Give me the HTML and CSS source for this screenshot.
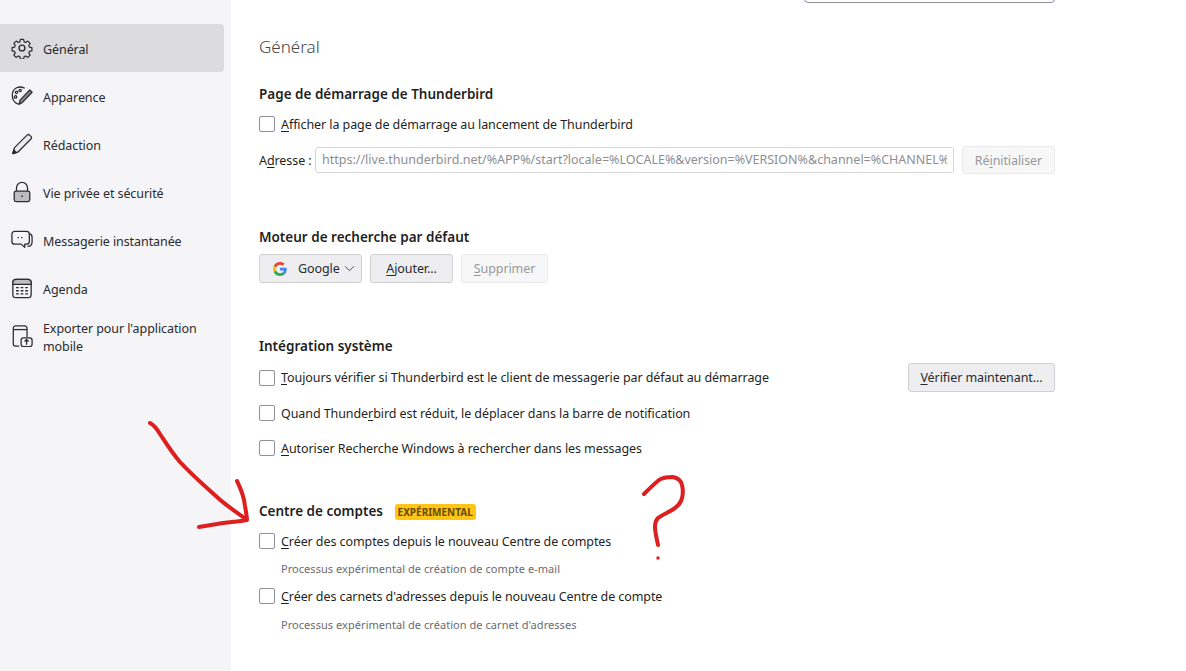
FILE: index.html
```html
<!DOCTYPE html>
<html lang="fr">

<head>
    <meta charset="UTF-8" />
    <title>Paramètres</title>
    <link rel="stylesheet" href="styles.css">
</head>

<body>
    <aside class="sidebar">
        <a class="nav-item active">
            <svg class="nav-icon" viewBox="0 0 24 24" fill="none" stroke="#2e2e32" stroke-width="1.5" stroke-linejoin="round">
                <path d="M10 1.500h4l.6 3 1.900.8 2.600-1.700 2.800 2.800-1.700 2.600.8 1.900 3 .6v4l-3 .6-.8 1.900 1.700 2.600-2.800 2.800-2.600-1.700-1.900.8-.6 3h-4l-.6-3-1.900-.8-2.600 1.700-2.800-2.800 1.700-2.600-.8-1.900-3-.6v-4l3-.6.8-1.900-1.700-2.600 2.800-2.800 2.600 1.700 1.900-.8z" transform="translate(1.200 1.200) scale(.9)" />
                <circle cx="12" cy="12" r="3.200" />
            </svg>
            <span>Général</span>
        </a>
        <a class="nav-item">
            <svg class="nav-icon" viewBox="0 0 24 24" fill="none" stroke="#2e2e32" stroke-width="1.4" stroke-linejoin="round">
                <path d="M15 3.500C9 .5 2 3 1.500 10c-.4 5 2 9 5.500 10.500 1.500.6 2.500-.2 3-1.500l1-2.500" />
                <path d="M9 21l.8-4.500L20.500 5.500l2.500 2.400L12.500 19z" fill="#8a8a8e" />
                <circle cx="6" cy="8" r="1.300" />
                <circle cx="5" cy="13" r="1.300" />
                <circle cx="10" cy="6" r="1.300" />
            </svg>
            <span>Apparence</span>
        </a>
        <a class="nav-item">
            <svg class="nav-icon" viewBox="0 0 24 24" fill="none" stroke="#2e2e32" stroke-width="1.4" stroke-linejoin="round">
                <path d="M2 22.500l1.800-6.500L17.500 2.300a2 2 0 0 1 2.800 0l1.400 1.400a2 2 0 0 1 0 2.800L8 20.500z" fill="#ececee" />
                <path d="M2 22.500l1-4 3 3z" fill="#2e2e32" />
            </svg>
            <span>Rédaction</span>
        </a>
        <a class="nav-item">
            <svg class="nav-icon" viewBox="0 0 24 24" fill="none" stroke="#2e2e32" stroke-width="1.4">
                <path d="M6 11V7.500a6 6 0 0 1 12 0V11" />
                <rect x="3.500" y="11" width="17" height="11.500" rx="2" fill="#bdbdc0" />
                <rect x="11.300" y="15.500" width="1.400" height="2.200" fill="#2e2e32" stroke="none" />
            </svg>
            <span>Vie privée et sécurité</span>
        </a>
        <a class="nav-item">
            <svg class="nav-icon" viewBox="0 0 24 24" fill="none" stroke="#2e2e32" stroke-width="1.4" stroke-linejoin="round">
                <path d="M4 2.500h13a3 3 0 0 1 3 3v8a3 3 0 0 1-3 3h-2v3.500l-4-3.500H4a3 3 0 0 1-3-3v-8a3 3 0 0 1 3-3z" />
                <path d="M20 5c2 .5 3 2 3 4v5c0 3-2 5-5 5" />
                <path d="M7 9.500h1.500M11 9.500h1.500" />
            </svg>
            <span>Messagerie instantanée</span>
        </a>
        <a class="nav-item">
            <svg class="nav-icon" viewBox="0 0 24 24" fill="none" stroke="#2e2e32" stroke-width="1.4">
                <rect x="2" y="2.500" width="20" height="20" rx="3.500" />
                <path d="M2 8h20V6a3.500 3.500 0 0 0-3.500-3.500h-13A3.500 3.500 0 0 0 2 6z" fill="#bdbdc0" />
                <path d="M5.500 11.500h3M10.500 11.500h3M15.500 11.500h3M5.500 15h3M10.500 15h3M15.500 15h3M5.500 18.500h3M10.500 18.500h3M15.500 18.500h3" />
            </svg>
            <span>Agenda</span>
        </a>
        <a class="nav-item">
            <svg class="nav-icon" viewBox="0 0 24 24" fill="none" stroke="#2e2e32" stroke-width="1.4">
                <path d="M9 23H5a2.500 2.500 0 0 1-2.500-2.500v-17A2.500 2.500 0 0 1 5 1h10a2.500 2.500 0 0 1 2.500 2.500V13" />
                <path d="M2.500 5h15" />
                <rect x="11" y="14" width="12" height="9.500" rx="2.500" />
                <path d="M17 21.500v-5.500M14.800 18l2.200-2.200 2.200 2.200" />
            </svg>
            <span>Exporter pour l'application mobile</span>
        </a>
    </aside>

    <main class="content">
        <div class="search-box"></div>
        <h1 class="page-title">Général</h1>

        <section class="group group-start">
            <h2>Page de démarrage de Thunderbird</h2>
            <label class="check-row"><span class="checkbox"></span><span><u>A</u>fficher la page de démarrage au lancement de Thunderbird</span></label>
            <div class="address-row">
                <span class="address-label">A<u>d</u>resse :</span>
                <div class="url-input"><span>https://live.thunderbird.net/%APP%/start?locale=%LOCALE%&amp;version=%VERSION%&amp;channel=%CHANNEL%&amp;os=%OS%</span></div>
                <button class="btn disabled reset">Ré<u>i</u>nitialiser</button>
            </div>
        </section>

        <section class="group group-search">
            <h2>Moteur de recherche par défaut</h2>
            <div class="engine-row">
                <button class="btn engine">
                    <svg class="google" viewBox="0 0 48 48">
                        <path fill="#ea4335" d="M24 9.500c3.500 0 6.700 1.300 9.200 3.400l6.900-6.900C35.900 2.200 30.300 0 24 0 14.600 0 6.500 5.400 2.600 13.200l8 6.200C12.500 13.600 17.800 9.500 24 9.500z" />
                        <path fill="#4285f4" d="M47 24.500c0-1.600-.2-3.100-.4-4.500H24v9h12.900c-.6 3-2.300 5.500-4.800 7.200l7.700 6C44.300 38 47 31.800 47 24.500z" />
                        <path fill="#fbbc05" d="M10.600 28.600c-.5-1.400-.8-3-.8-4.600s.3-3.200.8-4.600l-8-6.200C.9 16.500 0 20.100 0 24s.9 7.500 2.600 10.800z" />
                        <path fill="#34a853" d="M24 48c6.500 0 11.900-2.100 15.900-5.800l-7.700-6c-2.200 1.500-4.900 2.300-8.200 2.300-6.200 0-11.500-4.100-13.400-9.900l-8 6.200C6.500 42.600 14.600 48 24 48z" />
                    </svg>
                    <span>Google</span>
                    <svg class="chevron" viewBox="0 0 12 8" fill="none" stroke="#333" stroke-width="1"><path d="M1 1.500l5 5 5-5" /></svg>
                </button>
                <button class="btn add"><u>A</u>jouter...</button>
                <button class="btn disabled remove"><u>S</u>upprimer</button>
            </div>
        </section>

        <section class="group group-system">
            <h2>Intégration système</h2>
            <div class="default-row">
                <label class="check-row"><span class="checkbox"></span><span><u>T</u>oujours vérifier si Thunderbird est le client de messagerie par défaut au démarrage</span></label>
                <button class="btn check-now"><u>V</u>érifier maintenant...</button>
            </div>
            <label class="check-row"><span class="checkbox"></span><span>Quand Thunde<u>r</u>bird est réduit, le déplacer dans la barre de notification</span></label>
            <label class="check-row"><span class="checkbox"></span><span><u>A</u>utoriser Recherche Windows à rechercher dans les messages</span></label>
        </section>

        <section class="group group-accounts">
            <h2>Centre de comptes <span class="badge">EXPÉRIMENTAL</span></h2>
            <label class="check-row"><span class="checkbox"></span><span><u>C</u>réer des comptes depuis le nouveau Centre de comptes</span></label>
            <p class="hint">Processus expérimental de création de compte e-mail</p>
            <label class="check-row"><span class="checkbox"></span><span><u>C</u>réer des carnets d'adresses depuis le nouveau Centre de compte</span></label>
            <p class="hint">Processus expérimental de création de carnet d'adresses</p>
        </section>
    </main>

    <!-- red marker scribbles drawn on top of the screenshot -->
    <svg class="scribble" viewBox="0 0 1186 671" fill="none" stroke="#dd1f1f" stroke-width="4" stroke-linecap="round" stroke-linejoin="round">
        <path d="M150 423c4 2 7 6 10 11 6 9 12 19 20 28 12 13 26 25 38 36 9 8 18 14 28 21" />
        <path d="M237 481c4 8 7 16 8 25 1 6 2 11 2 14-9 2-20 2-30 4-6 1-12 2-18 3" />
        <path d="M644 494c5-5 10-10 15-14 4-3 9-3 14-3 5 1 8 3 9 8 1 4 1 9 0 13-1 5-5 9-10 12-5 3-10 5-14 8-3 3-3 6-3 9 0 6 2 12 3 18" />
        <circle cx="658" cy="558" r="1" fill="#dd1f1f" stroke-width="1.500" />
    </svg>
</body>

</html>
```

FILE: styles.css
```css
/* Base */
* {
    box-sizing: border-box;
    margin: 0;
    padding: 0;
}

html,
body {
    height: 671px;
    overflow: hidden;
}

body {
    display: flex;
    font-family: 'Noto Sans', 'Open Sans', sans-serif;
    font-size: 12.5px;
    letter-spacing: -0.08px;
    color: #1f1f23;
    background-color: #fff;
    position: relative;
}

u {
    text-underline-offset: 2px;
}

/* Sidebar */
.sidebar {
    width: 231px;
    flex-shrink: 0;
    background-color: #f5f5f7;
    padding: 24px 7px 0 0;
}

.nav-item {
    display: flex;
    align-items: center;
    gap: 10px;
    height: 48px;
    padding-left: 11px;
    border-radius: 0 4px 4px 0;
    line-height: 18px;
    color: #2a2a2e;
}

.nav-item span {
    padding-top: 4px;
}

.nav-item.active {
    background-color: #dcdcde;
}

.nav-icon {
    width: 22px;
    height: 22px;
    flex-shrink: 0;
}

/* Main column */
.content {
    width: 796px;
    margin-left: 28px;
    display: flex;
    flex-direction: column;
}

.search-box {
    align-self: flex-end;
    width: 251px;
    height: 32px;
    margin-top: -29px;
    border: 1px solid #8f8f9d;
    border-radius: 4px;
}

.page-title {
    margin-top: 32px;
    font-size: 17px;
    font-weight: 300;
    letter-spacing: 0;
    line-height: 24px;
    color: #45454a;
}

.group h2 {
    font-size: 13.5px;
    font-weight: 600;
    letter-spacing: 0;
    line-height: 20px;
    color: #1f1f23;
}

.group-start {
    margin-top: 25px;
}

.group-search {
    margin-top: 53px;
}

.group-system {
    margin-top: 53px;
}

.group-accounts {
    margin-top: 45px;
}

.group-accounts h2 + .check-row {
    margin-top: 12px;
}

/* Checkbox rows */
.check-row {
    display: flex;
    align-items: center;
    gap: 6px;
    height: 16px;
    margin-top: 13px;
    white-space: nowrap;
}

.group-start .check-row {
    margin-top: 12px;
}

.checkbox {
    width: 16px;
    height: 16px;
    flex-shrink: 0;
    background-color: #fff;
    border: 1px solid #8f8f9d;
    border-radius: 2px;
}

.hint {
    margin: 12px 0 11px 22px;
    font-size: 11px;
    letter-spacing: 0.05px;
    line-height: 16px;
    color: #6b6b70;
}

.hint + .check-row {
    margin-top: 0;
}

.hint:last-child {
    margin-top: 13px;
}

/* Address */
.address-row {
    display: flex;
    align-items: center;
    margin-top: 14px;
}

.address-label {
    width: 56px;
    flex-shrink: 0;
    white-space: nowrap;
}

.url-input {
    width: 639px;
    height: 26px;
    margin-right: 8px;
    padding: 0 6px;
    line-height: 24px;
    letter-spacing: 0;
    border: 1px solid #d5d5d8;
    border-radius: 3px;
    white-space: nowrap;
    color: #8e8e93;
}

.url-input span {
    display: block;
    overflow: hidden;
}

/* Buttons */
.btn {
    height: 29px;
    padding: 0;
    font-family: inherit;
    font-size: 12.5px;
    letter-spacing: -0.08px;
    color: #2a2a2e;
    background-color: #eeeef0;
    border: 1px solid #d0d0d3;
    border-radius: 3px;
}

.btn.disabled {
    color: #97979b;
    background-color: #f7f7f8;
    border-color: #eaeaec;
}

.reset {
    width: 93px;
    height: 28px;
}

.engine-row {
    display: flex;
    gap: 8px;
    margin-top: 7px;
}

.engine {
    display: flex;
    align-items: center;
    width: 103px;
    padding-left: 13px;
}

.google {
    width: 14px;
    height: 14px;
    margin-right: 11px;
}

.chevron {
    width: 11px;
    height: 7px;
    margin-left: 4px;
}

.add {
    width: 83px;
}

.remove {
    width: 87px;
}

.default-row {
    display: flex;
    align-items: center;
    justify-content: space-between;
    margin-top: 7px;
}

.default-row .check-row {
    margin-top: 0;
}

.check-now {
    width: 147px;
}

.check-row + .check-row {
    margin-top: 19px;
}

/* Badge */
.badge {
    display: inline-block;
    margin-left: 8px;
    padding: 0 3px;
    font-size: 10px;
    font-weight: 700;
    line-height: 16px;
    color: #6a4a00;
    background-color: #ffc517;
    border-radius: 3px;
}

/* Annotation overlay */
.scribble {
    position: absolute;
    top: 0;
    left: 0;
    width: 1186px;
    height: 671px;
    pointer-events: none;
}
```
